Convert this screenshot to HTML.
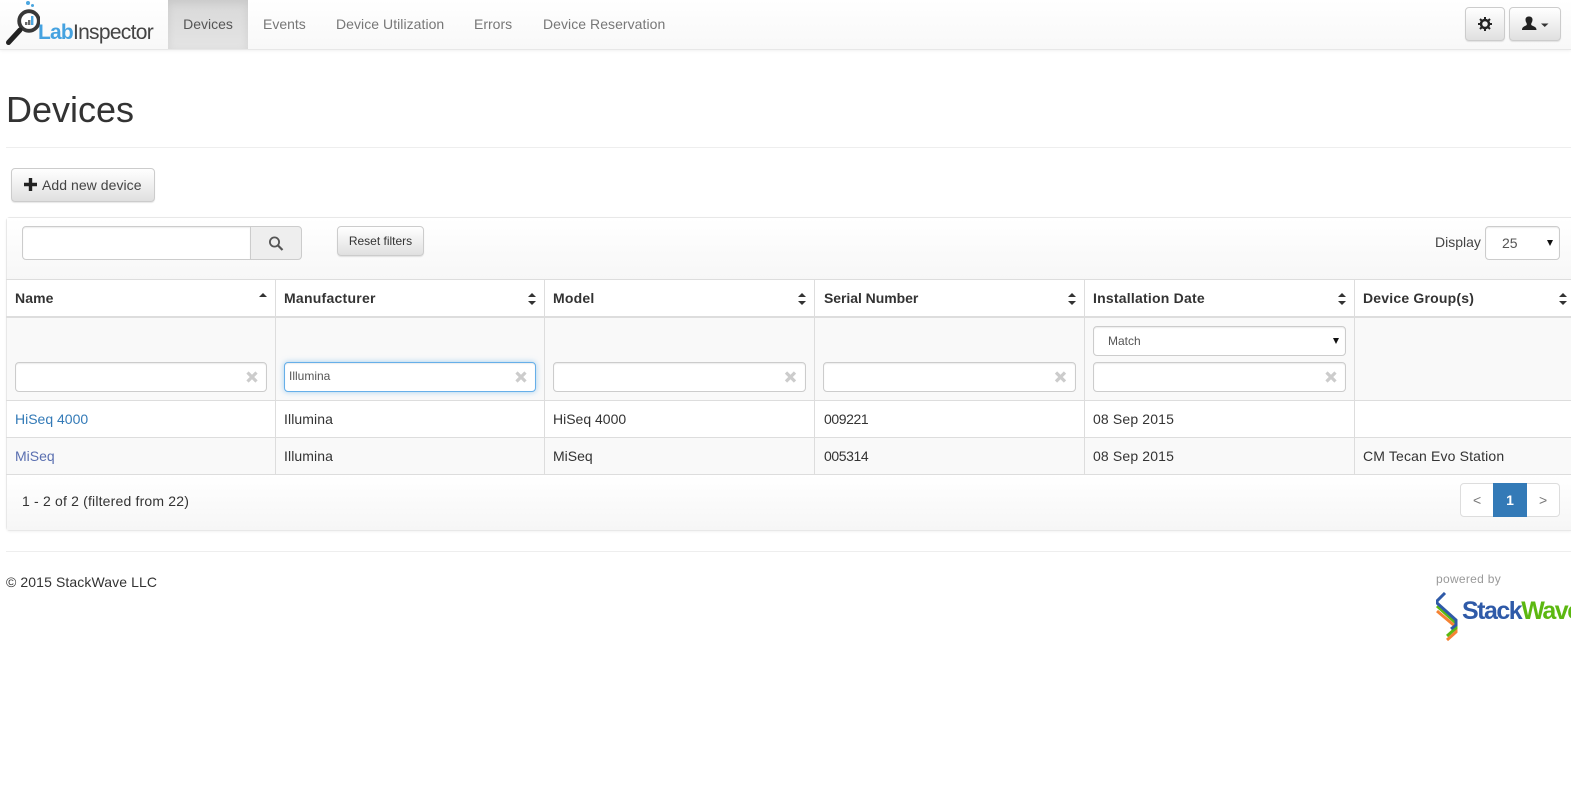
<!DOCTYPE html>
<html><head><meta charset="utf-8"><title>Devices</title>
<style>
*{box-sizing:border-box}
html,body{margin:0;padding:0;background:#fff;width:1571px;height:797px;overflow:hidden;font-family:"Liberation Sans",sans-serif;font-size:14px;color:#333}
.a{position:absolute;white-space:nowrap}
#nav{left:0;top:0;width:1571px;height:50px;background:linear-gradient(#fff,#f8f8f8);border-bottom:1px solid #e7e7e7;box-shadow:0 1px 3px rgba(0,0,0,.06)}
.nl{top:0;height:49px;line-height:49px;color:#777;font-size:14px}
#act{left:168px;top:0;width:80px;height:49px;background:linear-gradient(#d8d8d8,#e4e4e4);box-shadow:inset 0 3px 9px rgba(0,0,0,.08);text-align:center;line-height:49px;color:#555}
.btn{border:1px solid #ccc;border-radius:4px;background:linear-gradient(#fff,#e0e0e0);box-shadow:inset 0 1px 0 rgba(255,255,255,.15),0 1px 1px rgba(0,0,0,.1);color:#333;text-align:center}
.inp{background:#fff;border:1px solid #ccc;border-radius:4px;box-shadow:inset 0 1px 1px rgba(0,0,0,.075)}
.th{top:280px;height:36px;line-height:36px;font-weight:bold;font-size:14px;color:#333}
.vl{width:1px;background:#ddd;top:279px;height:195px}
.hl{left:6px;width:1565px;height:1px;background:#ddd}
.td{font-size:14px;line-height:20px}
</style></head><body>

<div id="nav" class="a"></div>
<svg class="a" style="left:0;top:0" width="40" height="50" viewBox="0 0 40 50">
 <circle cx="28" cy="3" r="2" fill="#4ba6e0"/><circle cx="32.500" cy="5.500" r="1.500" fill="#4ba6e0"/>
 <circle cx="29" cy="21" r="9.800" fill="#fff" stroke="#383838" stroke-width="3.800"/>
 <rect x="25" y="22" width="2.400" height="3" fill="#666"/><rect x="28" y="20" width="2.400" height="5" fill="#666"/><rect x="31" y="16" width="2.400" height="9" fill="#4ba6e0"/>
 <path d="M20 30L8.500 42.500" stroke="#222" stroke-width="5" stroke-linecap="round"/>
</svg>
<div class="a" style="left:38px;top:20px;font-size:21px;line-height:26px;letter-spacing:-.7px;color:#444"><span style="color:#45a2e0;font-weight:bold;letter-spacing:-.8px">Lab</span>Inspector</div>

<div id="act" class="a">Devices</div>
<div class="a nl" style="left:263px">Events</div>
<div class="a nl" style="left:336px;letter-spacing:.05px">Device Utilization</div>
<div class="a nl" style="left:474px">Errors</div>
<div class="a nl" style="left:543px;letter-spacing:.05px">Device Reservation</div>

<div class="a btn" style="left:1465px;top:7px;width:40px;height:34px"></div>
<svg class="a" style="left:1478px;top:17px" width="14" height="14" viewBox="0 0 14 14">
 <circle cx="7" cy="7" r="4" fill="none" stroke="#222" stroke-width="2.500"/>
 <path d="M7 0V3M7 11V14M0 7H3M11 7H14M2 2L4 4M10 10L12 12M12 2L10 4M4 10L2 12" stroke="#222" stroke-width="2"/>
</svg>
<div class="a btn" style="left:1509px;top:7px;width:52px;height:34px"></div>
<svg class="a" style="left:1521px;top:16px" width="30" height="15" viewBox="0 0 30 15">
 <path d="M1 14C1 11 3 10.500 5 9.500C6 9 6 8 5.500 7C4.500 5.500 4.500 4 4.500 3C5 1 6.500 .5 8 .5C9.500 .5 11 1 11.500 3C11.500 4 11.500 5.500 10.500 7C10 8 10 9 11 9.500C13 10.500 15.500 11 15.500 14Z" fill="#222"/>
 <path d="M20 7.500H27.500L23.750 11Z" fill="#333"/>
</svg>

<div class="a" style="left:6px;top:88px;font-size:36px;line-height:44px;color:#333;font-weight:normal">Devices</div>
<div class="a" style="left:6px;top:147px;width:1565px;height:1px;background:#eee"></div>

<div class="a btn" style="left:11px;top:168px;width:144px;height:34px"></div>
<svg class="a" style="left:24px;top:178px" width="13" height="13" viewBox="0 0 13 13"><path d="M4.800 0H8.200V4.800H13V8.200H8.200V13H4.800V8.200H0V4.800H4.800Z" fill="#222"/></svg>
<div class="a" style="left:42px;top:168px;height:34px;line-height:34px;color:#444;letter-spacing:.05px">Add new device</div>

<!-- panel -->
<div class="a" style="left:6px;top:217px;width:1565px;height:314px;border:1px solid #e8e8e8;border-right:0;border-radius:4px 0 0 4px;background:#fff;box-shadow:0 1px 2px rgba(0,0,0,.05)"></div>
<div class="a" style="left:7px;top:218px;width:1564px;height:61px;background:linear-gradient(#fff,#f7f7f7)"></div>

<div class="a inp" style="left:22px;top:226px;width:229px;height:34px;border-radius:4px 0 0 4px"></div>
<div class="a" style="left:250px;top:226px;width:52px;height:34px;background:#eee;border:1px solid #ccc;border-radius:0 4px 4px 0"></div>
<svg class="a" style="left:268px;top:235px" width="16" height="16" viewBox="0 0 16 16"><circle cx="6.500" cy="7" r="4.600" fill="none" stroke="#555" stroke-width="1.800"/><path d="M10 10.500L14.500 15" stroke="#555" stroke-width="2.200"/></svg>

<div class="a btn" style="left:337px;top:226px;width:87px;height:30px;font-size:12px;line-height:28px">Reset filters</div>

<div class="a" style="left:1435px;top:232px;line-height:20px;color:#444">Display</div>
<div class="a inp" style="left:1485px;top:226px;width:75px;height:34px"></div>
<div class="a" style="left:1502px;top:233px;line-height:20px;color:#555">25</div>
<div class="a" style="left:1547px;top:240px;width:0;height:0;border-left:3px solid transparent;border-right:3px solid transparent;border-top:6px solid #111"></div>

<!-- table -->
<div class="a" style="left:7px;top:318px;width:1564px;height:82px;background:#f9f9f9"></div>
<div class="a" style="left:7px;top:438px;width:1564px;height:36px;background:#f9f9f9"></div>
<div class="a" style="left:7px;top:475px;width:1564px;height:55px;background:linear-gradient(#fff,#f6f6f6)"></div>
<div class="a hl" style="top:279px"></div>
<div class="a hl" style="top:316px;height:2px"></div>
<div class="a hl" style="top:400px"></div>
<div class="a hl" style="top:437px"></div>
<div class="a hl" style="top:474px"></div>
<div class="a vl" style="left:275px"></div>
<div class="a vl" style="left:544px"></div>
<div class="a vl" style="left:814px"></div>
<div class="a vl" style="left:1084px"></div>
<div class="a vl" style="left:1354px"></div>

<div class="a th" style="left:15px;letter-spacing:.1px">Name</div>
<div class="a th" style="left:284px;letter-spacing:.25px">Manufacturer</div>
<div class="a th" style="left:553px;letter-spacing:.2px">Model</div>
<div class="a th" style="left:824px;letter-spacing:-.05px">Serial Number</div>
<div class="a th" style="left:1093px;letter-spacing:.22px">Installation Date</div>
<div class="a th" style="left:1363px;letter-spacing:.2px">Device Group(s)</div>

<svg class="a" style="left:0;top:286px" width="1571" height="24" viewBox="0 0 1571 24" fill="#333">
 <path d="M259 11L263 7L267 11Z"/>
 <path d="M528 11L532 7L536 11ZM528 15H536L532 19Z"/>
 <path d="M798 11L802 7L806 11ZM798 15H806L802 19Z"/>
 <path d="M1068 11L1072 7L1076 11ZM1068 15H1076L1072 19Z"/>
 <path d="M1338 11L1342 7L1346 11ZM1338 15H1346L1342 19Z"/>
 <path d="M1559 11L1563 7L1567 11ZM1559 15H1567L1563 19Z"/>
</svg>

<div class="a inp" style="left:15px;top:362px;width:252px;height:30px"></div>
<div class="a inp" style="left:284px;top:362px;width:252px;height:30px;border-color:#66afe9;box-shadow:inset 0 1px 1px rgba(0,0,0,.075),0 0 6px rgba(102,175,233,.6)"></div>
<div class="a" style="left:289px;top:366px;font-size:12px;line-height:20px;color:#555">Illumina</div>
<div class="a inp" style="left:553px;top:362px;width:253px;height:30px"></div>
<div class="a inp" style="left:823px;top:362px;width:253px;height:30px"></div>
<div class="a inp" style="left:1093px;top:362px;width:253px;height:30px"></div>
<div class="a inp" style="left:1093px;top:326px;width:253px;height:30px"></div>
<div class="a" style="left:1108px;top:331px;font-size:12px;line-height:20px;color:#555">Match</div>
<div class="a" style="left:1333px;top:338px;width:0;height:0;border-left:3px solid transparent;border-right:3px solid transparent;border-top:6px solid #111"></div>

<svg class="a" style="left:0;top:371px" width="1571" height="12" viewBox="0 0 1571 12" stroke="#ccc" stroke-width="3.200">
 <path d="M247.500 1.500L256.500 10.500M256.500 1.500L247.500 10.500"/>
 <path d="M516.500 1.500L525.500 10.500M525.500 1.500L516.500 10.500"/>
 <path d="M786 1.500L795 10.500M795 1.500L786 10.500"/>
 <path d="M1056 1.500L1065 10.500M1065 1.500L1056 10.500"/>
 <path d="M1326.500 1.500L1335.500 10.500M1335.500 1.500L1326.500 10.500"/>
</svg>

<div class="a td" style="left:15px;top:409px;color:#337ab7">HiSeq 4000</div>
<div class="a td" style="left:284px;top:409px;letter-spacing:.1px">Illumina</div>
<div class="a td" style="left:553px;top:409px">HiSeq 4000</div>
<div class="a td" style="left:824px;top:409px;letter-spacing:-.4px">009221</div>
<div class="a td" style="left:1093px;top:409px;letter-spacing:.15px">08 Sep 2015</div>

<div class="a td" style="left:15px;top:446px;color:#5a6fb0">MiSeq</div>
<div class="a td" style="left:284px;top:446px;letter-spacing:.1px">Illumina</div>
<div class="a td" style="left:553px;top:446px">MiSeq</div>
<div class="a td" style="left:824px;top:446px;letter-spacing:-.4px">005314</div>
<div class="a td" style="left:1093px;top:446px;letter-spacing:.15px">08 Sep 2015</div>
<div class="a td" style="left:1363px;top:446px;letter-spacing:.15px">CM Tecan Evo Station</div>

<div class="a" style="left:22px;top:491px;line-height:20px;letter-spacing:.18px">1 - 2 of 2 (filtered from 22)</div>

<div class="a" style="left:1460px;top:483px;width:100px;height:34px;background:#fff;border:1px solid #ddd;border-radius:4px"></div>
<div class="a" style="left:1493px;top:483px;width:34px;height:34px;background:#337ab7;color:#fff;text-align:center;line-height:34px;font-weight:bold">1</div>
<div class="a" style="left:1473px;top:483px;line-height:34px;color:#777">&lt;</div>
<div class="a" style="left:1539px;top:483px;line-height:34px;color:#777">&gt;</div>

<div class="a" style="left:6px;top:551px;width:1565px;height:1px;background:#eee"></div>
<div class="a" style="left:6px;top:572px;line-height:20px;letter-spacing:.1px">&copy; 2015 StackWave LLC</div>

<div class="a" style="left:1436px;top:572px;font-size:12px;line-height:15px;color:#999;letter-spacing:.3px">powered by</div>
<svg class="a" style="left:1436px;top:592px" width="22" height="50" viewBox="0 0 22 50" fill="none" stroke-width="3">
 <path d="M1 19L20 35V40L11 48" stroke="#f58233"/>
 <path d="M1 14L20 31V36L11 44" stroke="#5cb811"/>
 <path d="M9 1L1 9V11L20 28V33L15 37" stroke="#2f5aa8"/>
</svg>
<div class="a" style="left:1462px;top:596px;font-size:25px;line-height:30px;font-weight:bold;letter-spacing:-1.5px;color:#2f5aa8">Stack<span style="color:#5cb811">Wave</span></div>

</body></html>
